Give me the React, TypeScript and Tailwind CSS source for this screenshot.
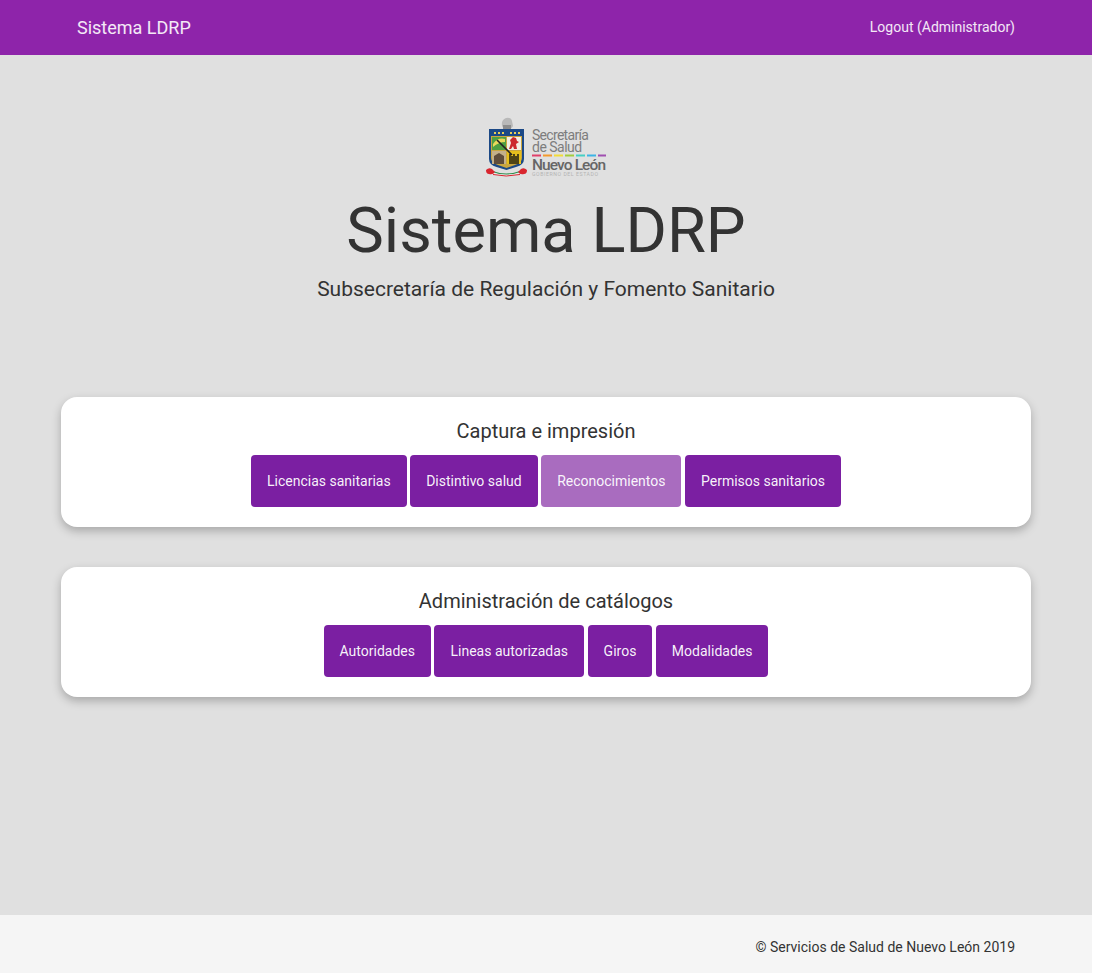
import React from 'react';

const capturaItems = [
  { label: 'Licencias sanitarias' },
  { label: 'Distintivo salud' },
  { label: 'Reconocimientos', disabled: true },
  { label: 'Permisos sanitarios' },
];

const catalogoItems = [
  { label: 'Autoridades' },
  { label: 'Lineas autorizadas' },
  { label: 'Giros' },
  { label: 'Modalidades' },
];

const Logo = () => (
  <svg width="122" height="60" viewBox="0 0 122 60" className="block">
    <defs>
      <filter id="soft" x="-5%" y="-5%" width="110%" height="110%">
        <feGaussianBlur stdDeviation="0.45" />
      </filter>
    </defs>
    <g filter="url(#soft)">
      {/* casco */}
      <path d="M17 9q-1-6 4-8 5-1 6 3l1 5q-1 3-5 3h-4z" fill="#b9b9b9" />
      <path d="M18 8h8v5h-8z" fill="#8d8d8d" />
      {/* escudo */}
      <path d="M4 12h35v30q0 6-8 8l-9.500 3-10-3q-7.500-2-7.500-8z" fill="#1d4a86" />
      <path d="M6 19h31v22q0 5-7 7l-8.500 3-8.500-3q-7-2-7-7z" fill="#c9a63f" />
      <g fill="#e6cf58">
        <rect x="9" y="15" width="2" height="2" />
        <rect x="13" y="15" width="2" height="2" />
        <rect x="17" y="15" width="2" height="2" />
        <rect x="25" y="15" width="2" height="2" />
        <rect x="29" y="15" width="2" height="2" />
        <rect x="33" y="15" width="2" height="2" />
      </g>
      <rect x="7" y="20" width="14" height="13" fill="#4f9f42" />
      <path d="M8 27q5-7 12-5v3q-6 0-12 5z" fill="#e9d85c" />
      <rect x="22" y="20" width="14" height="13" fill="#f3efe3" />
      <path d="M24 32l2-6-1-3 3-3 3 1 1 3 2 1-3 2 1 5h-3l-1-3-2 3z" fill="#cc2a2d" />
      <rect x="7" y="34" width="14" height="13" fill="#c4b08a" />
      <path d="M9 47v-8l5-3 5 3v8z" fill="#5f4d3b" />
      <rect x="22" y="34" width="14" height="13" fill="#e6bf1f" />
      <path d="M24 47v-10h2v2h2v-2h2v2h2v-2h2v10z" fill="#4f4418" />
      <path d="M12 23l15 15" stroke="#222" strokeWidth="1.6" />
      {/* listón */}
      <path d="M6 54q15 6 31 0" fill="none" stroke="#2f9150" strokeWidth="1.2" />
      <path d="M7 56q14 5 29 0" fill="none" stroke="#eeeeee" strokeWidth="1" />
      <path d="M8 57.500q13 3 27 0" fill="none" stroke="#d9252f" strokeWidth="1" />
      <path d="M1 53q3-3 6-1l3 3q-2 3-6 2-3 0-3-4zM42 53q-3-3-6-1l-3 3q2 3 6 2 3 0 3-4z" fill="#d9252f" />
    </g>
    <text x="47" y="23" fontFamily="Roboto, sans-serif" fontSize="14" letterSpacing="-0.7" fill="#7d7d7d">Secretaría</text>
    <text x="47" y="34.500" fontFamily="Roboto, sans-serif" fontSize="14" letterSpacing="-0.5" fill="#7d7d7d">de Salud</text>
    <rect x="47" y="37.500" width="9" height="2" fill="#e0406a" />
    <rect x="58" y="37.500" width="9" height="2" fill="#f39a2d" />
    <rect x="69" y="37.500" width="9" height="2" fill="#f2dc3a" />
    <rect x="80" y="37.500" width="9" height="2" fill="#a4cc3c" />
    <rect x="91" y="37.500" width="9" height="2" fill="#46cfc4" />
    <rect x="102" y="37.500" width="9" height="2" fill="#3cb4e6" />
    <rect x="113" y="37.500" width="8" height="2" fill="#a04fb0" />
    <text x="47" y="53" fontFamily="Roboto, sans-serif" fontSize="15.500" fontWeight="500" letterSpacing="-0.9" fill="#666">Nuevo León</text>
    <text x="47" y="59" fontFamily="Roboto, sans-serif" fontSize="5.200" letterSpacing="0.55" fill="#b4b4b4">GOBIERNO DEL ESTADO</text>
  </svg>
);

const MenuCard = ({ title, items }: { title: string; items: { label: string; disabled?: boolean }[] }) => (
  <div className="bg-white rounded-2xl h-[130px] pt-[20px] shadow-[0_4px_10px_rgba(0,0,0,0.25)]">
    <h2 className="text-[20px] leading-[28px] text-center text-[#333]">{title}</h2>
    <div className="mt-[10px] flex justify-center gap-[3.5px]">
      {items.map((item) => (
        <button
          key={item.label}
          className={`h-[52px] px-4 rounded text-[14px] text-white/95 ${
            item.disabled ? 'bg-[#a96cbf]' : 'bg-[#7b1fa2]'
          }`}
        >
          {item.label}
        </button>
      ))}
    </div>
  </div>
);

export default function App() {
  return (
    <div className="w-[1092px] min-h-[973px] flex flex-col bg-[#e0e0e0] font-['Roboto',sans-serif]">
      <nav className="h-[55px] bg-[#8e24aa] text-white/90">
        <div className="w-[970px] h-full mx-auto px-4 flex items-center justify-between">
          <span className="text-[18px]">Sistema LDRP</span>
          <span className="text-[14px]">Logout (Administrador)</span>
        </div>
      </nav>

      <main className="flex-1 w-[970px] mx-auto">
        <div className="pt-[62px] flex flex-col items-center text-[#333]">
          <Logo />
          <h1 className="mt-[16px] text-[63.2px] leading-[75px] font-normal text-[#333]">Sistema LDRP</h1>
          <p className="mt-[7px] text-[21px] leading-[28px]">Subsecretaría de Regulación y Fomento Sanitario</p>
        </div>

        <div className="mt-[94px] flex flex-col gap-10">
          <MenuCard title="Captura e impresión" items={capturaItems} />
          <MenuCard title="Administración de catálogos" items={catalogoItems} />
        </div>
      </main>

      <footer className="h-[58px] bg-[#f5f5f5]">
        <div className="w-[970px] h-full mx-auto px-4 pt-[6px] flex items-center justify-end text-[14px] text-[#333]">
          © Servicios de Salud de Nuevo León 2019
        </div>
      </footer>
    </div>
  );
}
